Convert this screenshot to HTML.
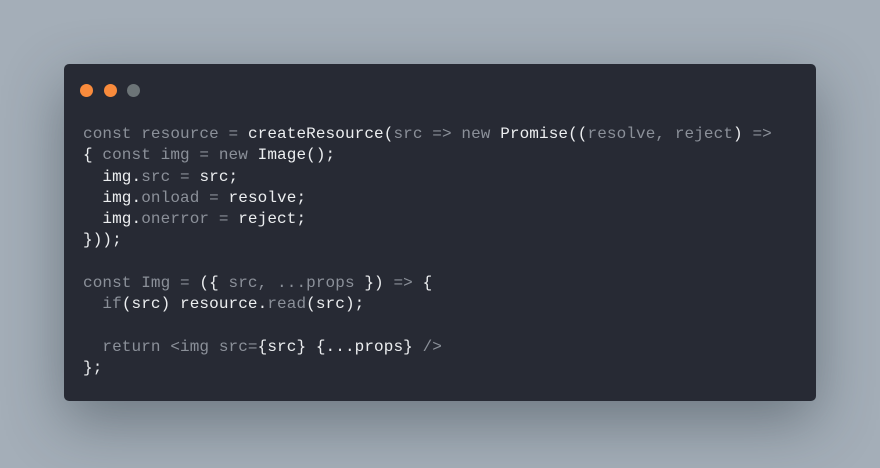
<!DOCTYPE html>
<html><head><style>
html,body{margin:0;padding:0;}
body{width:880px;height:468px;background:#a4aeb8;position:relative;overflow:hidden;}
.card{position:absolute;left:64px;top:64px;width:752px;height:337px;background:#272a34;border-radius:5px;box-shadow:0 20px 60px rgba(40,50,60,0.45);}
.dot{position:absolute;top:20px;width:13px;height:13px;border-radius:50%;}
pre{position:absolute;left:19px;top:60px;margin:0;font-family:"Liberation Mono",monospace;font-size:16px;line-height:21.3px;color:#8b9099;letter-spacing:0.1px;}
b{font-weight:normal;color:#eceef0;}
</style></head><body>
<div class="card">
<div class="dot" style="left:16px;background:#f98b3c"></div>
<div class="dot" style="left:40px;background:#f98b3c"></div>
<div class="dot" style="left:63px;background:#6c7477"></div>
<pre>const resource = <b>createResource(</b>src =&gt; new <b>Promise((</b>resolve, reject<b>)</b> =&gt;
<b>{</b> const img = new <b>Image();</b>
  <b>img.</b>src = <b>src;</b>
  <b>img.</b>onload = <b>resolve;</b>
  <b>img.</b>onerror = <b>reject;</b>
<b>}));</b>

const Img = <b>({</b> src, ...props <b>})</b> =&gt; <b>{</b>
  if<b>(src) resource.</b>read<b>(src);</b>

  return &lt;img src=<b>{src} {...props}</b> /&gt;
<b>};</b></pre>
</div>
</body></html>
